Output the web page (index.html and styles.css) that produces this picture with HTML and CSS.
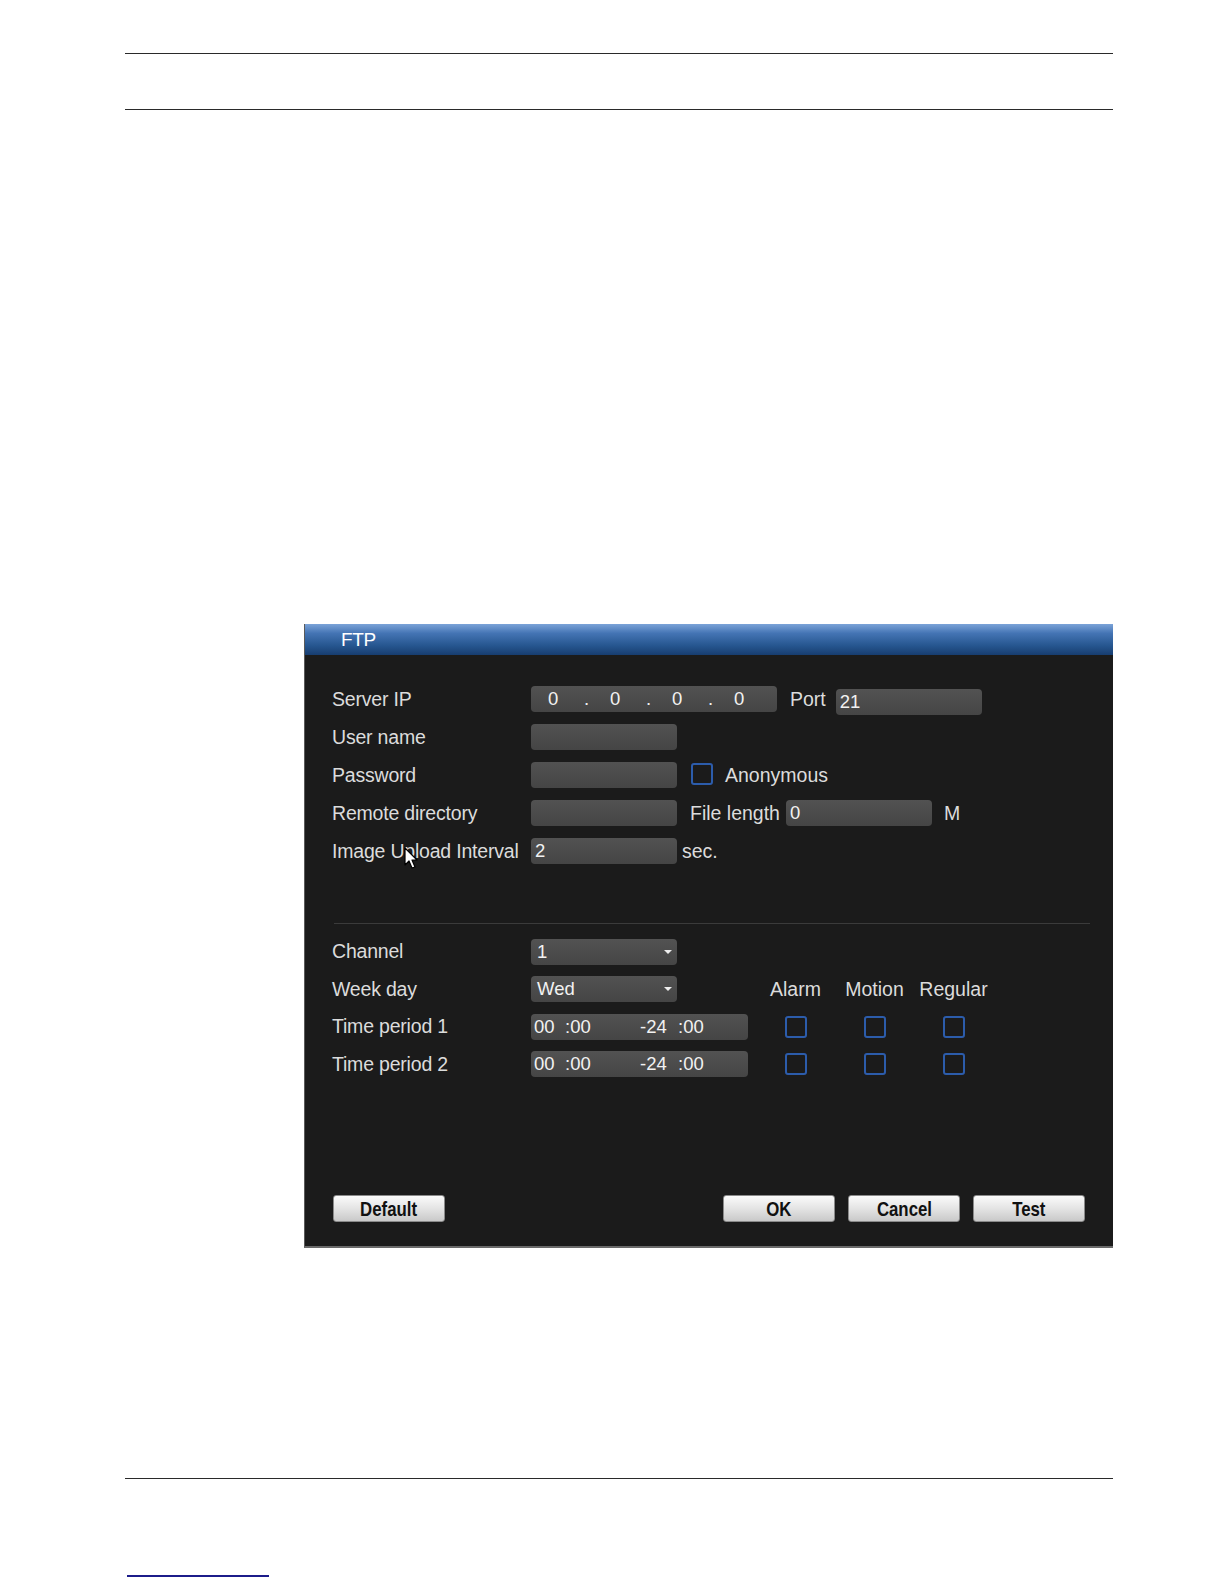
FILE: index.html
```html
<!DOCTYPE html>
<html lang="en">
  <head>
    <meta charset="UTF-8" />
    <meta name="viewport" content="width=device-width, initial-scale=1.0" />
    <title>FTP</title>
    <link rel="stylesheet" href="styles.css">
  </head>

  <body>
    <div class="page">
      <div class="page_head"></div>

      <div class="panel">
        <div class="title_bar">FTP</div>

        <div class="panel_body">
          <div class="form_top">
            <div class="row">
              <span class="label">Server IP</span>
              <div class="field ip_field">
                <span class="seg">0</span><span class="dot">.</span>
                <span class="seg">0</span><span class="dot">.</span>
                <span class="seg">0</span><span class="dot">.</span>
                <span class="seg">0</span>
              </div>
              <span class="after port_label">Port</span>
              <div class="field port_field">21</div>
            </div>

            <div class="row">
              <span class="label">User name</span>
              <div class="field"></div>
            </div>

            <div class="row">
              <span class="label">Password</span>
              <div class="field"></div>
              <span class="check anon_check"></span>
              <span class="after">Anonymous</span>
            </div>

            <div class="row">
              <span class="label">Remote directory</span>
              <div class="field"></div>
              <span class="after">File length</span>
              <div class="field length_field">0</div>
              <span class="after unit">M</span>
            </div>

            <div class="row">
              <span class="label">Image Upload Interval</span>
              <div class="field">2</div>
              <span class="after sec">sec.</span>
            </div>
          </div>

          <div class="separator"></div>

          <div class="schedule">
            <span class="label">Channel</span>
            <div class="field select">1<span class="arrow"></span></div>
            <span></span><span></span><span></span>

            <span class="label">Week day</span>
            <div class="field select">Wed<span class="arrow"></span></div>
            <span class="col_head">Alarm</span>
            <span class="col_head">Motion</span>
            <span class="col_head">Regular</span>

            <span class="label">Time period 1</span>
            <div class="field time_field">
              <span class="t1">00</span><span class="t2">:00</span><span class="t3">-24</span><span>:00</span>
            </div>
            <span class="cell"><span class="check"></span></span>
            <span class="cell"><span class="check"></span></span>
            <span class="cell"><span class="check"></span></span>

            <span class="label">Time period 2</span>
            <div class="field time_field">
              <span class="t1">00</span><span class="t2">:00</span><span class="t3">-24</span><span>:00</span>
            </div>
            <span class="cell"><span class="check"></span></span>
            <span class="cell"><span class="check"></span></span>
            <span class="cell"><span class="check"></span></span>
          </div>

          <svg class="cursor" width="16" height="24" viewBox="0 0 16 24">
            <path d="M1 1 L1 18 L5 14 L8 21 L11 20 L8 13 L13 13 Z" fill="#fff" stroke="#000" stroke-width="1.2" stroke-linejoin="round" />
          </svg>
        </div>

        <div class="button_bar">
          <div class="btn"><span>Default</span></div>
          <div class="btn_group">
            <div class="btn"><span>OK</span></div>
            <div class="btn"><span>Cancel</span></div>
            <div class="btn"><span>Test</span></div>
          </div>
        </div>
      </div>

      <div class="page_foot"></div>
      <div class="foot_link"></div>
    </div>
  </body>
</html>
```

FILE: styles.css
```css
html,
body {
  margin: 0;
  padding: 0;
  overflow: hidden;
  background-color: #fff;
  font-family: "Liberation Sans", Arial, sans-serif;
}

.page {
  width: 1224px;
  height: 1584px;
  overflow: hidden;
  padding-top: 53px;
  box-sizing: border-box;
}

.page_head {
  width: 988px;
  height: 55px;
  margin-left: 125px;
  border-top: 1px solid #2a2a2a;
  border-bottom: 1px solid #2a2a2a;
}

.panel {
  position: relative;
  width: 809px;
  height: 624px;
  margin: 514px 0 0 304px;
  display: flex;
  flex-direction: column;
  background-color: #1b1b1b;
  border-left: 1px solid #5a5a5a;
  border-bottom: 2px solid #6a6a6a;
  box-sizing: border-box;
}

.title_bar {
  height: 31px;
  padding-left: 36px;
  line-height: 32px;
  font-size: 19px;
  color: #fff;
  background: linear-gradient(#7ba3d8 0%, #4474b4 30%, #26568f 70%, #173d70 100%);
  letter-spacing: -0.3px;
}

.panel_body {
  flex: 1;
  padding: 25px 0 0 27px;
  color: #dcdcdc;
  font-size: 19.5px;
}

.form_top {
  display: flex;
  flex-direction: column;
}

.row {
  height: 38px;
  display: flex;
  align-items: center;
}

.label {
  width: 199px;
  flex-shrink: 0;
  letter-spacing: -0.2px;
  white-space: nowrap;
}

.field {
  width: 146px;
  height: 26px;
  box-sizing: border-box;
  padding-left: 4px;
  border-radius: 4px;
  background: linear-gradient(#525252, #454545);
  color: #f2f2f2;
  font-size: 18.5px;
  line-height: 28px;
  display: flex;
  align-items: center;
  flex-shrink: 0;
}

.after {
  margin: 0 6px 0 13px;
  white-space: nowrap;
}

.ip_field {
  width: 246px;
  padding-left: 17px;
}

.ip_field .seg {
  width: 36px;
}

.ip_field .dot {
  width: 26px;
}

.port_label {
  margin-left: 13px;
}

.port_field {
  margin-top: 6px;
  margin-left: 4px;
}

.unit {
  margin-left: 12px;
}

.sec {
  margin-left: 5px;
}

.check {
  width: 18px;
  height: 18px;
  border: 2px solid #2c5cab;
  border-radius: 3px;
  flex-shrink: 0;
  display: inline-block;
}

.anon_check {
  margin-left: 14px;
  margin-top: -2px;
}

.anon_check + .after {
  margin-left: 12px;
}

.separator {
  height: 1px;
  width: 756px;
  margin: 53px 0 0 2px;
  background-color: #3b3b3b;
}

.schedule {
  display: grid;
  grid-template-columns: 199px 225px 79px 79px 79px;
  grid-auto-rows: 37.5px;
  align-items: center;
  margin-top: 9px;
}

.select {
  position: relative;
  padding-left: 6px;
}

.arrow {
  position: absolute;
  right: 5px;
  top: 11px;
  width: 0;
  height: 0;
  border-left: 4px solid transparent;
  border-right: 4px solid transparent;
  border-top: 4px solid #eee;
}

.time_field {
  width: 217px;
  padding-left: 3px;
}

.t1 {
  width: 31px;
}

.t2 {
  width: 75px;
}

.t3 {
  width: 38px;
}

.col_head {
  text-align: center;
  white-space: nowrap;
}

.cell {
  display: flex;
  justify-content: center;
}

.cursor {
  position: absolute;
  left: 99px;
  top: 223px;
}

.button_bar {
  display: flex;
  justify-content: space-between;
  padding: 0 28px 24px 28px;
}

.btn_group {
  display: flex;
  gap: 13px;
}

.btn {
  width: 112px;
  height: 27px;
  box-sizing: border-box;
  border: 1px solid #8a8a8a;
  border-radius: 3px;
  background: linear-gradient(#fbfbfb, #e4e4e4 50%, #c9c9c9);
  color: #111;
  font-size: 21px;
  font-weight: bold;
  text-align: center;
  line-height: 26px;
}

.btn span {
  display: inline-block;
  transform: scaleX(0.8);
}

.page_foot {
  width: 988px;
  margin: 230px 0 0 125px;
  border-top: 1px solid #2a2a2a;
}

.foot_link {
  width: 142px;
  margin: 96px 0 0 127px;
  border-top: 2px solid #1c1c8a;
}
```
